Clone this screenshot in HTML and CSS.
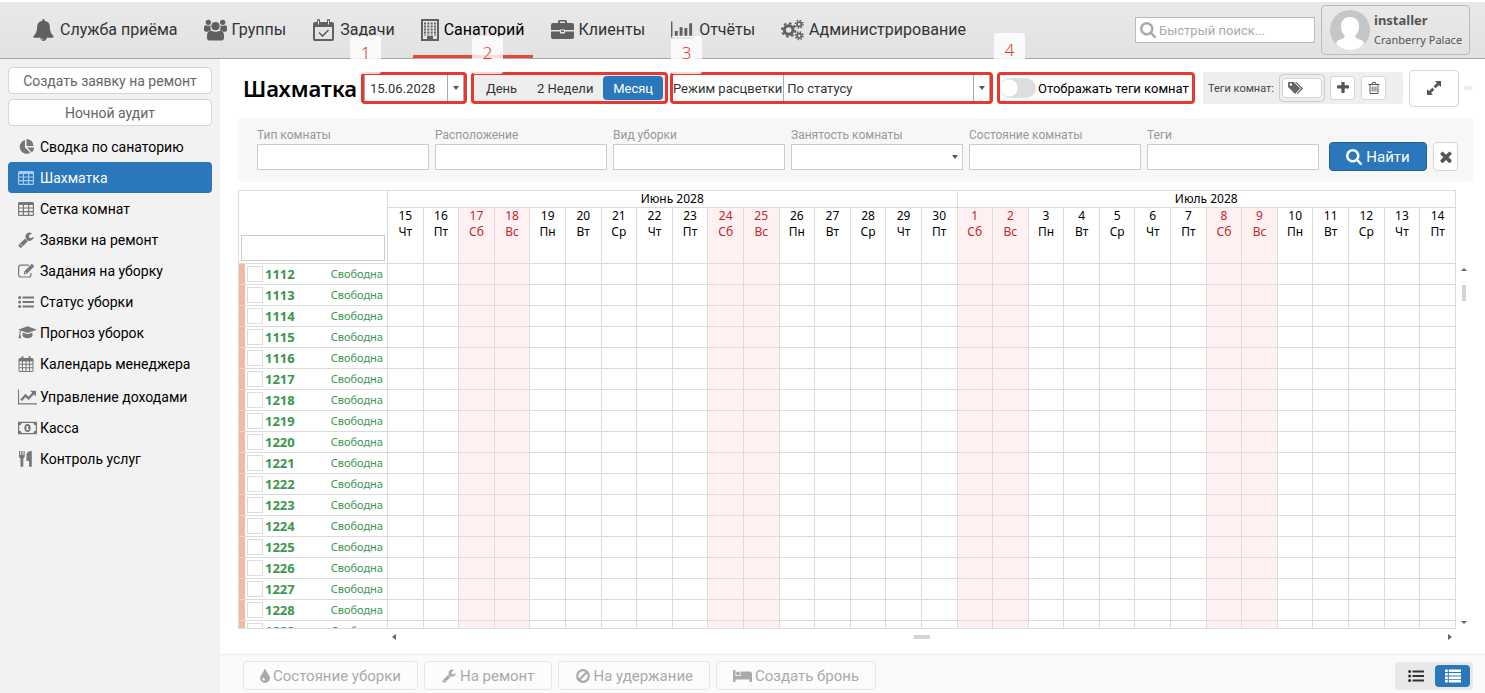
FILE: index.html
```html
<!DOCTYPE html>
<html lang="ru">

<head>
    <meta charset="UTF-8">
    <meta name="viewport" content="width=device-width, initial-scale=1.0">
    <title>Шахматка</title>
    <link rel="stylesheet" href="styles.css">
</head>

<body>
    <!-- Icon sprite -->
    <svg class="sprite" aria-hidden="true">
        <symbol id="i-bell" viewBox="0 0 1792 1792"><path d="M912 1696q0-16-16-16-59 0-101.500-42.500t-42.500-101.500q0-16-16-16t-16 16q0 73 51.500 124.500t124.500 51.500q16 0 16-16zm816-288q0 52-38 90t-90 38h-448q0 106-75 181t-181 75-181-75-75-181h-448q-52 0-90-38t-38-90q50-42 91-88t85-119.500 74.500-158.500 50-206 19.500-260q0-152 117-282.500t307-158.500q-8-19-8-39 0-40 28-68t68-28 68 28 28 68q0 20-8 39 190 28 307 158.500t117 282.500q0 139 19.500 260t50 206 74.500 158.500 85 119.500 91 88z"/></symbol>
        <symbol id="i-users" viewBox="0 0 24 22"><circle cx="4.500" cy="3" r="2.800"/><circle cx="19.500" cy="3" r="2.800"/><path d="M0 9q0-3 2-3 2 1 5 .300Q6 9 7.500 11q-2 0-3.500 1.800H2Q0 12.500 0 11zM24 9q0-3-2-3-2 1-5 .300 1 2.700-.500 4.700 2 0 3.500 1.800h2q2-.300 2-1.800z"/><circle cx="12" cy="7" r="4.300"/><path d="M3 18.500Q3 11.500 7 11.500q5 2.800 10 0 4 0 4 7 0 3.500-3.500 3.500h-11Q3 22 3 18.500z"/></symbol>
        <symbol id="i-task" viewBox="0 0 21 22"><path fill-rule="evenodd" d="M2 3h2V1q0-1 1.500-1T7 1v2h7V1q0-1 1.500-1T17 1v2h2q2 0 2 2v15q0 2-2 2H2q-2 0-2-2V5q0-2 2-2zm0 5v12h17V8zM5 1.500v4h1v-4zm10 0v4h1v-4z"/><path d="M6 13.500l3.500 3.500 6-6" fill="none" stroke="currentColor" stroke-width="1.600"/></symbol>
        <symbol id="i-building" viewBox="0 0 18 22"><path fill-rule="evenodd" d="M0 0h18v22H0zM2 2v18h4v-3h6v3h4V2z"/><path d="M4 3.500v13M7.300 3.500v13M10.700 3.500v13M14 3.500v13" fill="none" stroke="currentColor" stroke-width="2" stroke-dasharray="2 1"/></symbol>
        <symbol id="i-case" viewBox="0 0 23 20"><path fill-rule="evenodd" d="M7 3V1.500Q7 0 8.500 0h6Q16 0 16 1.500V3h5q2 0 2 2v5H14V9.500H9v.500H0V5q0-2 2-2zm2-1.500V3h5V1.500z"/><path d="M0 11.500h9v2h5v-2h9V17q0 2-2 2H2q-2 0-2-2z"/><path d="M10 10.500h3v1.500h-3z"/></symbol>
        <symbol id="i-bars" viewBox="0 0 24 18"><path d="M0 0h1.500v16.500H24V18H0zM4 10h3v5H4zM9 6h3v9H9zM14 7h3v8h-3zM19 2h3v13h-3z"/></symbol>
        <symbol id="i-gears" viewBox="0 0 24 22"><g fill="none" stroke="currentColor"><circle cx="8" cy="11" r="4.500" stroke-width="3.200"/><circle cx="8" cy="11" r="7" stroke-width="2" stroke-dasharray="2.750 2.750"/><circle cx="19" cy="5" r="2.300" stroke-width="1.800"/><circle cx="19" cy="5" r="4" stroke-width="1.600" stroke-dasharray="1.570 1.570"/><circle cx="19" cy="17" r="2.300" stroke-width="1.800"/><circle cx="19" cy="17" r="4" stroke-width="1.600" stroke-dasharray="1.570 1.570"/></g></symbol>
        <symbol id="i-search" viewBox="64 128 1664 1664"><path d="M1216 832q0-185-131.500-316.500t-316.500-131.500-316.500 131.500-131.500 316.500 131.500 316.500 316.500 131.500 316.500-131.500 131.500-316.500zm512 832q0 52-38 90t-90 38q-54 0-90-38l-343-342q-179 124-399 124-143 0-273.500-55.500t-225-150-150-225-55.500-273.500 55.500-273.500 150-225 225-150 273.500-55.500 273.500 55.500 225 150 150 225 55.500 273.500q0 220-124 399l343 343q37 37 37 90z"/></symbol>
        <symbol id="i-pie" viewBox="0 0 16 16"><path d="M7 1v7.500l5.300 5.300A7 7 0 1 1 7 1zM8.500 0A7 7 0 0 1 15.500 7h-7zM9 8.500h7a7 7 0 0 1-2 5z"/></symbol>
        <symbol id="i-table" viewBox="0 0 16 14"><path fill-rule="evenodd" d="M1.500 0h13Q16 0 16 1.500v11q0 1.500-1.500 1.500h-13Q0 14 0 12.500v-11Q0 0 1.500 0zM1.200 3v2.500h3.600V3zm4.800 0v2.500h4V3zm5.200 0v2.500h3.600V3zm-10 3.600V9h3.600V6.600zm4.800 0V9h4V6.600zm5.200 0V9h3.600V6.600zm-10 3.600v2.600h3.600v-2.600zm4.800 0v2.600h4v-2.600zm5.200 0v2.600h3.600v-2.600z"/></symbol>
        <symbol id="i-wrench" viewBox="64 64 1664 1728"><path d="M448 1472q0-26-19-45t-45-19-45 19-19 45 19 45 45 19 45-19 19-45zm644-420l-682 682q-37 37-90 37-52 0-91-37l-106-108q-38-36-38-90 0-53 38-91l681-681q39 98 114.500 173.500t173.500 114.500zm634-435q0 39-23 106-47 134-164.500 217.500t-258.500 83.500q-185 0-316.500-131.500t-131.500-316.500 131.500-316.500 316.500-131.500q58 0 121.500 16.500t107.500 46.500q16 11 16 28t-16 28l-293 169v224l193 107q5-3 79-48.500t135.500-81 70.500-35.500q15 0 23.500 10t8.500 25z"/></symbol>
        <symbol id="i-edit" viewBox="0 0 16 14"><path d="M11 1.200H3Q.600 1.200 .600 3.500v7Q.600 13 3 13h7.500q2.500 0 2.500-2.500V9" fill="none" stroke="currentColor" stroke-width="1.200"/><path fill-rule="evenodd" d="M12.500 1l2.600 2.600L9 9.800l-3.200.700.600-3.300zM7 8.200l.7 1.500 1-.500-1-1zM13.100.400q.8-.700 1.600.100l1 1q.700.700 0 1.500l-.5.400L12.600.9z"/></symbol>
        <symbol id="i-list" viewBox="0 0 16 12"><circle cx="1.600" cy="1.500" r="1.500"/><circle cx="1.600" cy="6" r="1.500"/><circle cx="1.600" cy="10.500" r="1.500"/><path d="M4.500.500H16v2H4.500zM4.500 5H16v2H4.500zM4.500 9.500H16v2H4.500z"/></symbol>
        <symbol id="i-cap" viewBox="0 0 20 14"><path d="M10 0l10 3.500L10 7 3.500 4.700Q2.500 5.500 2.500 8l.8 4.500H.500L1.500 8q0-3 .8-3.800L0 3.500z"/><path d="M5 6.500l5 1.700 5-1.700.3 3.500q-1 2.500-5.300 2.500T4.700 10z"/></symbol>
        <symbol id="i-cal" viewBox="0 0 15 16"><path fill-rule="evenodd" d="M1.500 2H3V1q0-1 1-1t1 1v1h5V1q0-1 1-1t1 1v1h1.500Q15 2 15 3.500v11q0 1.500-1.500 1.500h-12Q0 16 0 14.500v-11Q0 2 1.500 2zM1 5.500v2.300h2.500V5.500zm3.500 0v2.300H7V5.500zm3.500 0v2.300h2.500V5.500zm3.500 0v2.300H14V5.500zM1 8.800v2.400h2.500V8.800zm3.500 0v2.400H7V8.800zm3.500 0v2.400h2.500V8.800zm3.500 0v2.400H14V8.800zM1 12.200V15h2.500v-2.800zm3.500 0V15H7v-2.800zm3.500 0V15h2.500v-2.800zm3.500 0V15H14v-2.800z"/></symbol>
        <symbol id="i-line" viewBox="0 0 18 14"><path d="M0 0h1v13h17v1H0z"/><path d="M3 10l4-4.500 3 2.700L15 3" fill="none" stroke="currentColor" stroke-width="2.200"/><path d="M11.500 1H17v5.500z"/></symbol>
        <symbol id="i-money" viewBox="0 0 18 12"><path fill-rule="evenodd" d="M0 0h18v12H0zM1.200 3.500v5q2 0 2.300 2.300h11q.300-2.300 2.300-2.300v-5q-2 0-2.300-2.300h-11Q3.200 3.500 1.200 3.500z"/><path fill-rule="evenodd" d="M9 2.200q3 0 3 3.800t-3 3.800T6 6t3-3.800zM8.500 4l-1 .7v.8h.8V7.200h-.8V8h3v-.8h-.8V4z"/></symbol>
        <symbol id="i-fork" viewBox="0 0 14 16"><path d="M0 0h1.200v4h1V0h1.300v4h1V0H5.700v5Q5.700 7 4.300 7.500V15q0 1-1.300 1t-1.500-1V7.500Q0 7 0 5zM12.800 0v15q0 1-1.500 1T10 15v-5H7.500V4Q7.500 0 12.800 0z"/></symbol>
        <symbol id="i-tags" viewBox="0 0 17 13"><path fill-rule="evenodd" d="M1 0h5l7 7-5.500 6L0 5.500V1q0-1 1-1zm2 1.500a1.300 1.300 0 1 0 .1 0z"/><path d="M7.500 0H9l7 7-5.500 6-1.200-.7L14 7z"/></symbol>
        <symbol id="i-plus" viewBox="192 256 1408 1408"><path d="M1600 736v192q0 40-28 68t-68 28h-416v416q0 40-28 68t-68 28h-192q-40 0-68-28t-28-68v-416h-416q-40 0-68-28t-28-68v-192q0-40 28-68t68-28h416v-416q0-40 28-68t68-28h192q40 0 68 28t28 68v416h416q40 0 68 28t28 68z"/></symbol>
        <symbol id="i-trash" viewBox="0 0 11 12"><path fill-rule="evenodd" d="M0 2h3L3.700.500Q4 0 4.500 0h2q.5 0 .8.500L8 2h3v1h-1v7.500Q10 12 9 12H2q-1 0-1-1.500V3H0zm4 0h3l-.5-1h-2zM2 3v7.500q0 .5.300.5h6.400q.3 0 .3-.5V3zm1.200 1.500h.9v5h-.9zm1.900 0H6v5h-.9zm1.900 0h.9v5H7z"/></symbol>
        <symbol id="i-expand" viewBox="0 0 14 14"><path d="M8 0h6v6l-2-2-3.300 3.300-2-2L10 2zM0 14V8l2 2 3.300-3.300 2 2L4 12l2 2z"/></symbol>
        <symbol id="i-times" viewBox="302 302 1188 1252"><path d="M1490 1322q0 40-28 68l-136 136q-28 28-68 28t-68-28l-294-294-294 294q-28 28-68 28t-68-28l-136-136q-28-28-28-68t28-68l294-294-294-294q-28-28-28-68t28-68l136-136q28-28 68-28t68 28l294 294 294-294q28-28 68-28t68 28l136 136q28 28 28 68t-28 68l-294 294 294 294q28 28 28 68z"/></symbol>
        <symbol id="i-drop" viewBox="0 0 10 14"><path fill-rule="evenodd" d="M5 0q.6 0 1 1.300Q6.500 3 8.800 6 10 7.800 10 9.200A5 4.800 0 0 1 0 9.200Q0 7.800 1.200 6 3.500 3 4 1.300 4.400 0 5 0zM3.500 8.500q-2 2.500 0 3t1.200-1.500z"/></symbol>
        <symbol id="i-ban" viewBox="0 0 14 14"><circle cx="7" cy="7" r="5.800" fill="none" stroke="currentColor" stroke-width="2.200"/><path d="M3 11l8-8" stroke="currentColor" stroke-width="2.200"/></symbol>
        <symbol id="i-bed" viewBox="0 0 19 12"><path d="M0 0h2.500v6H19v6h-2.500V9.500h-14V12H0z"/><circle cx="5" cy="3.500" r="2"/><path d="M7.500 1.500h9q2.500 0 2.500 2.500v2.500H7.500z"/></symbol>
        <symbol id="i-rows" viewBox="0 0 17 14"><path d="M0 0h3v2.700H0zM4 0h13v2.700H4zM0 3.700h3v2.700H0zM4 3.700h13v2.700H4zM0 7.400h3v2.700H0zM4 7.400h13v2.700H4zM0 11.100h3v2.700H0zM4 11.100h13v2.700H4z"/></symbol>
    </svg>

    <header class="header">
        <nav class="nav">
            <a href="#" class="nav-link"><svg class="icon nav-icon"><use href="#i-bell"/></svg>Служба приёма</a>
            <a href="#" class="nav-link"><svg class="icon nav-icon"><use href="#i-users"/></svg>Группы</a>
            <a href="#" class="nav-link"><svg class="icon nav-icon"><use href="#i-task"/></svg>Задачи</a>
            <a href="#" class="nav-link active"><svg class="icon nav-icon narrow"><use href="#i-building"/></svg>Санаторий</a>
            <a href="#" class="nav-link"><svg class="icon nav-icon"><use href="#i-case"/></svg>Клиенты</a>
            <a href="#" class="nav-link"><svg class="icon nav-icon"><use href="#i-bars"/></svg>Отчёты</a>
            <a href="#" class="nav-link"><svg class="icon nav-icon"><use href="#i-gears"/></svg>Администрирование</a>
        </nav>
        <label class="search">
            <svg class="icon"><use href="#i-search"/></svg>
            <input type="text" placeholder="Быстрый поиск..." aria-label="Быстрый поиск">
        </label>
        <button type="button" class="user">
            <svg class="avatar" viewBox="0 0 40 40"><circle cx="20" cy="20" r="20" fill="#c6c6c6"/><path d="M20 7c6 0 9 4 9 9 0 4-1 7-4 10 1 3 4 3 8 5l1 3q-6 6-14 6T6 34l1-3c4-2 7-2 8-5-3-3-4-6-4-10 0-5 3-9 9-9z" fill="#fff"/></svg>
            <span class="user-text"><b>installer</b><span>Cranberry Palace</span></span>
        </button>
    </header>

    <div class="layout">
        <aside class="sidebar">
            <button type="button" class="side-btn">Создать заявку на ремонт</button>
            <button type="button" class="side-btn">Ночной аудит</button>
            <nav class="menu">
                <a href="#" class="menu-link"><svg class="icon"><use href="#i-pie"/></svg>Сводка по санаторию</a>
                <a href="#" class="menu-link active"><svg class="icon"><use href="#i-table"/></svg>Шахматка</a>
                <a href="#" class="menu-link"><svg class="icon"><use href="#i-table"/></svg>Сетка комнат</a>
                <a href="#" class="menu-link"><svg class="icon"><use href="#i-wrench"/></svg>Заявки на ремонт</a>
                <a href="#" class="menu-link"><svg class="icon"><use href="#i-edit"/></svg>Задания на уборку</a>
                <a href="#" class="menu-link"><svg class="icon"><use href="#i-list"/></svg>Статус уборки</a>
                <a href="#" class="menu-link"><svg class="icon wide"><use href="#i-cap"/></svg>Прогноз уборок</a>
                <a href="#" class="menu-link"><svg class="icon"><use href="#i-cal"/></svg>Календарь менеджера</a>
                <a href="#" class="menu-link spaced"><svg class="icon wide"><use href="#i-line"/></svg>Управление доходами</a>
                <a href="#" class="menu-link"><svg class="icon wide"><use href="#i-money"/></svg>Касса</a>
                <a href="#" class="menu-link"><svg class="icon"><use href="#i-fork"/></svg>Контроль услуг</a>
            </nav>
        </aside>

        <main class="main">
            <div class="toolbar">
                <h1>Шахматка</h1>
                <div class="marked date-box">
                    <span class="mark mark-date">1</span>
                    <input type="text" value="15.06.2028" aria-label="Дата">
                    <button type="button" class="caret" aria-label="Календарь"></button>
                </div>
                <div class="marked period">
                    <span class="mark">2</span>
                    <button type="button">День</button>
                    <button type="button">2 Недели</button>
                    <button type="button" class="active">Месяц</button>
                </div>
                <div class="marked mode">
                    <span class="mark">3</span>
                    <label for="mode">Режим расцветки</label>
                    <div class="select-box split">
                        <select id="mode">
                            <option>По статусу</option>
                        </select>
                    </div>
                </div>
                <label class="marked switch">
                    <span class="mark mark-high">4</span>
                    <input type="checkbox">
                    <span>Отображать теги комнат</span>
                </label>
                <div class="tags">
                    <span>Теги комнат:</span>
                    <div class="tag-box"><button type="button" aria-label="Теги"><svg class="icon"><use href="#i-tags"/></svg></button></div>
                    <button type="button" class="square" aria-label="Добавить"><svg class="icon"><use href="#i-plus"/></svg></button>
                    <button type="button" class="square" aria-label="Удалить"><svg class="icon"><use href="#i-trash"/></svg></button>
                </div>
                <button type="button" class="expand" aria-label="Развернуть"><svg class="icon"><use href="#i-expand"/></svg></button>
                <span class="handle"></span>
            </div>

            <form class="filter">
                <div class="field"><label for="type">Тип комнаты</label><input type="text" id="type"></div>
                <div class="field"><label for="place">Расположение</label><input type="text" id="place"></div>
                <div class="field"><label for="clean">Вид уборки</label><input type="text" id="clean"></div>
                <div class="field"><label for="busy">Занятость комнаты</label>
                    <div class="select-box"><select id="busy"><option></option></select></div>
                </div>
                <div class="field"><label for="state">Состояние комнаты</label><input type="text" id="state"></div>
                <div class="field"><label for="tag">Теги</label><input type="text" id="tag"></div>
                <button type="button" class="find"><svg class="icon"><use href="#i-search"/></svg>Найти</button>
                <button type="button" class="clear" aria-label="Очистить"><svg class="icon"><use href="#i-times"/></svg></button>
            </form>

            <div class="board">
                <div class="grid">
                    <table>
                        <colgroup id="cols">
                            <col class="room-col">
                        </colgroup>
                        <thead>
                            <tr class="months">
                                <th rowspan="2" class="corner"><input type="text" aria-label="Номер комнаты"></th>
                                <th colspan="16">Июнь 2028</th>
                                <th colspan="14">Июль 2028</th>
                            </tr>
                            <tr class="days" id="days"></tr>
                        </thead>
                        <tbody id="rooms"></tbody>
                    </table>
                </div>
                <div class="vscroll"><i class="arrow up"></i><i class="thumb"></i><i class="arrow down"></i></div>
                <div class="hscroll"><i class="arrow left"></i><i class="thumb"></i><i class="arrow right"></i></div>
            </div>

            <footer class="footer">
                <button type="button" class="action" disabled><svg class="icon drop"><use href="#i-drop"/></svg>Состояние уборки</button>
                <button type="button" class="action" disabled><svg class="icon"><use href="#i-wrench"/></svg>На ремонт</button>
                <button type="button" class="action" disabled><svg class="icon"><use href="#i-ban"/></svg>На удержание</button>
                <button type="button" class="action" disabled><svg class="icon bed"><use href="#i-bed"/></svg>Создать бронь</button>
                <div class="view">
                    <button type="button" aria-label="Список"><svg class="icon"><use href="#i-list"/></svg></button>
                    <button type="button" class="active" aria-label="Таблица"><svg class="icon"><use href="#i-rows"/></svg></button>
                </div>
            </footer>
        </main>
    </div>

    <script>
        const names = ["Чт", "Пт", "Сб", "Вс", "Пн", "Вт", "Ср"];
        const rooms = [1112, 1113, 1114, 1115, 1116, 1217, 1218, 1219, 1220, 1221, 1222, 1223, 1224, 1225, 1226, 1227, 1228, 1229];

        let cols = "";
        let head = "";
        let cells = "";
        for (let i = 0; i < 30; i++) {
            const day = i < 16 ? 15 + i : i - 15;
            const name = names[i % 7];
            const cls = name === "Сб" || name === "Вс" ? ' class="weekend"' : "";
            cols += "<col>";
            head += `<th${cls}>${day}<br>${name}</th>`;
            cells += `<td${cls}></td>`;
        }
        document.getElementById("cols").insertAdjacentHTML("beforeend", cols);
        document.getElementById("days").innerHTML = head;
        document.getElementById("rooms").innerHTML = rooms.map(room => `
            <tr>
                <td class="room"><label><input type="checkbox"><b>${room}</b><span>Свободна</span></label></td>
                ${cells}
            </tr>`).join("");
    </script>
</body>

</html>
```

FILE: styles.css
```css
* {
    box-sizing: border-box;
}

body {
    display: flex;
    flex-direction: column;
    height: 100vh;
    margin: 0;
    font-family: "Noto Sans", "Open Sans", sans-serif;
    font-size: 14px;
    color: #000;
    background: #fff;
}

button,
input,
select {
    font: inherit;
    color: inherit;
    padding: 0;
    margin: 0;
    border-radius: 0;
}

input,
select {
    background: #fff;
    border: 1px solid #ccc;
    outline: none;
}

select {
    appearance: none;
    width: 100%;
}

button {
    display: flex;
    align-items: center;
    justify-content: center;
    background: #fff;
    border: 1px solid #d5d5d5;
    border-radius: 4px;
    white-space: nowrap;
}

a {
    color: inherit;
    text-decoration: none;
}

.sprite {
    display: none;
}

.icon {
    flex: none;
    width: 16px;
    height: 16px;
    fill: currentColor;
}

/* Header */
.header {
    display: flex;
    align-items: center;
    flex: none;
    height: 59px;
    padding: 0 15px 0 24px;
    border-top: 2px solid #fff;
    border-bottom: 1px solid #a6a6a6;
    background: linear-gradient(#e9e9e9, #e2e2e2);
}

.nav {
    display: flex;
    flex: 1;
    gap: 10px;
    align-self: stretch;
    font-family: Roboto, sans-serif;
    font-size: 16px;
    color: #333;
}

.nav-link {
    display: flex;
    align-items: center;
    gap: 5px;
    padding: 2px 8px 0;
    border-bottom: 3px solid transparent;
    white-space: nowrap;
}

.nav-link.active {
    color: #000;
    border-bottom-color: #e64a33;
}

.nav-icon {
    width: 23px;
    height: 22px;
    color: #606060;
}

.nav-icon.narrow {
    width: 18px;
}

.search {
    display: flex;
    align-items: center;
    gap: 3px;
    width: 180px;
    height: 26px;
    margin-right: 6px;
    padding-left: 4px;
    background: #fff;
    border: 1px solid #bbb;
    color: #aaa;
}

.search input {
    flex: 1;
    min-width: 0;
    border: 0;
    font-family: Roboto, sans-serif;
    font-size: 13px;
}

.search input::placeholder {
    color: #aaa;
}

.user {
    gap: 4px;
    width: 149px;
    height: 50px;
    justify-content: flex-start;
    padding-left: 8px;
    background: transparent;
    border-color: #bbb;
    color: #555;
}

.avatar {
    width: 40px;
    height: 40px;
}

.user-text {
    display: flex;
    flex-direction: column;
    text-align: left;
    font-size: 11px;
    line-height: 20px;
}

.user-text b {
    font-size: 13px;
}

.layout {
    display: flex;
    flex: 1;
    min-height: 0;
}

/* Sidebar */
.sidebar {
    flex: none;
    width: 220px;
    padding: 8px;
    background: #f2f2f2;
}

.side-btn {
    width: 100%;
    height: 27px;
    margin-bottom: 5px;
    font-family: Roboto, sans-serif;
    font-size: 14px;
    color: #666;
}

.menu {
    font-family: Roboto, sans-serif;
    font-size: 14px;
}

.menu-link {
    display: flex;
    align-items: center;
    height: 31px;
    padding-left: 10px;
    border-radius: 4px;
    white-space: nowrap;
}

.menu-link .icon {
    margin-right: 6px;
    color: #777;
}

.menu-link .wide {
    width: 19px;
    margin-right: 3px;
}

.menu-link.spaced {
    margin-top: 2px;
}

.menu-link.active {
    background: #2a77bc;
    color: #fff;
}

.menu-link.active .icon {
    color: #a5cdf0;
}

/* Main */
.main {
    display: flex;
    flex-direction: column;
    flex: 1;
    min-width: 0;
}

.toolbar {
    display: flex;
    align-items: center;
    flex: none;
    gap: 4px;
    height: 58px;
    margin-bottom: 1px;
    padding: 0 12px 0 23px;
    white-space: nowrap;
}

h1 {
    margin: 0;
    width: 114px;
    font-size: 22px;
    line-height: 32px;
    font-weight: 600;
}

.marked {
    position: relative;
    display: flex;
    align-items: center;
    height: 32px;
    border: 3px solid #e53930;
    border-radius: 4px;
    font-family: Roboto, sans-serif;
    font-size: 13px;
    color: #333;
}

.mark {
    position: absolute;
    left: -2px;
    bottom: 27px;
    width: 31px;
    height: 38px;
    padding-top: 4px;
    border-radius: 3px;
    background: rgba(255, 255, 255, 0.8);
    color: #e53930;
    font-family: "Noto Sans", sans-serif;
    font-size: 17px;
    font-weight: 300;
    line-height: 25px;
    text-align: center;
    z-index: 1;
}

.mark-date {
    left: -14px;
}

.mark-high {
    left: -6px;
    bottom: 30px;
}

.date-box {
    width: 106px;
}

.date-box input {
    flex: 1;
    min-width: 0;
    height: 26px;
    padding-left: 5px;
    border-width: 0 1px;
    border-color: #aaa;
}

.caret {
    width: 16px;
    height: 26px;
    border: 0;
    border-right: 1px solid #aaa;
    border-radius: 0;
}

.caret::after,
.select-box::after {
    content: "";
    border: 3px solid transparent;
    border-top: 4px solid #555;
    border-bottom: 0;
}

.period {
    width: 197px;
    padding: 0 2px;
    background: #eee;
}

.period button {
    flex: 1 0 auto;
    height: 24px;
    padding: 0 8px;
    border: 0;
    background: transparent;
}

.period .active,
.view .active {
    background: #2a77bc;
    color: #fff;
}

.mode {
    flex: 1;
    margin-left: -2px;
}

.mode label {
    padding-right: 1px;
}

.select-box {
    position: relative;
    flex: 1;
}

.select-box select {
    display: block;
    height: 26px;
    padding-left: 3px;
}

.select-box::after {
    position: absolute;
    right: 5px;
    top: 11px;
}

.split select {
    border-width: 0 1px;
    border-color: #aaa;
    background: linear-gradient(#aaa, #aaa) no-repeat right 15px top / 1px 100%;
}

.switch {
    gap: 2px;
    width: 198px;
    color: #000;
}

.switch input {
    appearance: none;
    width: 36px;
    height: 20px;
    border: 0;
    border-radius: 10px;
    background: radial-gradient(circle at 9px 10px, #fff 8px, #ddd 9px);
}

.tags {
    display: flex;
    align-items: center;
    gap: 5px;
    width: 200px;
    height: 32px;
    margin: 0 2px 0 4px;
    padding-left: 5px;
    border-radius: 3px;
    background: #eee;
    color: #444;
    font-family: Roboto, sans-serif;
    font-size: 11px;
}

.tag-box {
    padding: 3px 2px;
    border: 1px solid #ccc;
    border-radius: 4px;
}

.tag-box button {
    width: 40px;
    height: 20px;
    padding-right: 12px;
    color: #666;
}

.square {
    width: 25px;
    height: 24px;
    color: #555;
}

.square + .square {
    margin-left: 1px;
}

.square .icon {
    width: 12px;
    height: 12px;
}

.expand {
    width: 50px;
    height: 37px;
    color: #555;
}

.expand .icon {
    width: 14px;
    height: 14px;
}

.handle {
    width: 10px;
    height: 4px;
    border-radius: 2px;
    background: #eee;
}

/* Filter */
.filter {
    display: flex;
    align-items: flex-end;
    flex: none;
    gap: 6px;
    height: 64px;
    margin: 0 12px 8px 18px;
    padding: 0 15px 11px 19px;
    border-radius: 3px;
    background: #f7f7f7;
}

.field {
    flex: 1;
    min-width: 0;
    padding-bottom: 1px;
    color: #999;
    font-family: Roboto, sans-serif;
    font-size: 12px;
}

.field label {
    display: block;
    line-height: 18px;
}

.field input,
.field select {
    display: block;
    width: 100%;
    height: 26px;
    color: #000;
}

.find {
    gap: 4px;
    width: 98px;
    height: 29px;
    margin-left: 4px;
    border-color: #20629e;
    background: #2a77bc;
    color: #fff;
    font-family: Roboto, sans-serif;
    font-size: 15px;
}

.clear {
    width: 25px;
    height: 29px;
    color: #555;
}

.clear .icon {
    width: 12px;
    height: 12px;
}

/* Room board */
.board {
    display: grid;
    grid-template: minmax(0, 1fr) 25px / minmax(0, 1fr) 17px;
    flex: 1;
    min-height: 0;
    margin: 0 12px 0 18px;
}

.grid {
    overflow: hidden;
    border: 1px solid #dcdcdc;
    border-right: 0;
}

table {
    width: 100%;
    table-layout: fixed;
    border-collapse: separate;
    border-spacing: 0;
}

.room-col {
    width: 149px;
}

th,
td {
    padding: 0;
    border-right: 1px solid #dcdcdc;
    border-bottom: 1px solid #dcdcdc;
    font-size: 12px;
    font-weight: 400;
    line-height: 16px;
}

.months th {
    height: 17px;
}

.days th {
    height: 56px;
    vertical-align: top;
}

.months .corner {
    padding: 0 2px 2px;
    vertical-align: bottom;
}

.corner input {
    display: block;
    width: 100%;
    height: 26px;
}

td {
    height: 21px;
}

.weekend {
    background: #fff0f1;
}

th.weekend {
    color: #c1272d;
}

.room label {
    display: flex;
    align-items: center;
    height: 20px;
    padding-right: 4px;
    border-left: 6px solid #f4b9a3;
    color: #3c9650;
}

.room input {
    appearance: none;
    width: 16px;
    height: 16px;
    margin: 0 2px;
    border-color: #ddd;
}

.room b {
    flex: 1;
    font-size: 13px;
}

.room span {
    font-size: 11px;
}

.vscroll,
.hscroll {
    display: flex;
    align-items: center;
}

.vscroll {
    flex-direction: column;
    justify-content: space-between;
    padding: 78px 1px 5px 0;
}

.hscroll {
    justify-content: space-between;
    height: 16px;
    padding: 0 4px 0 154px;
}

.arrow {
    border: 3px solid transparent;
}

.up {
    border-top: 0;
    border-bottom-color: #666;
}

.down {
    border-bottom: 0;
    border-top-color: #666;
}

.left {
    border-left: 0;
    border-right: 4px solid #666;
}

.right {
    border-right: 0;
    border-left: 4px solid #666;
}

.thumb {
    background: #d4d2d3;
}

.vscroll .thumb {
    width: 4px;
    height: 16px;
    margin: 14px 0 auto;
}

.hscroll .thumb {
    width: 16px;
    height: 4px;
}

/* Footer */
.footer {
    display: flex;
    align-items: center;
    flex: none;
    gap: 6px;
    height: 39px;
    padding: 3px 12px 0 23px;
    border-top: 1px solid #ebebeb;
    background: #fafafa;
}

.action {
    gap: 3px;
    height: 29px;
    padding: 0 16px;
    border-color: #e6e6e6;
    background: #fcfcfc;
    color: #aaa;
    font-family: Roboto, sans-serif;
    font-size: 15px;
}

.action .icon {
    height: 14px;
}

.action .drop {
    width: 10px;
}

.action .bed {
    width: 19px;
}

.view {
    display: flex;
    gap: 2px;
    margin-left: auto;
    padding: 3px;
    border-radius: 3px;
    background: #e8e8e8;
}

.view button {
    width: 35px;
    height: 22px;
    border: 0;
    background: transparent;
    color: #333;
}
```
